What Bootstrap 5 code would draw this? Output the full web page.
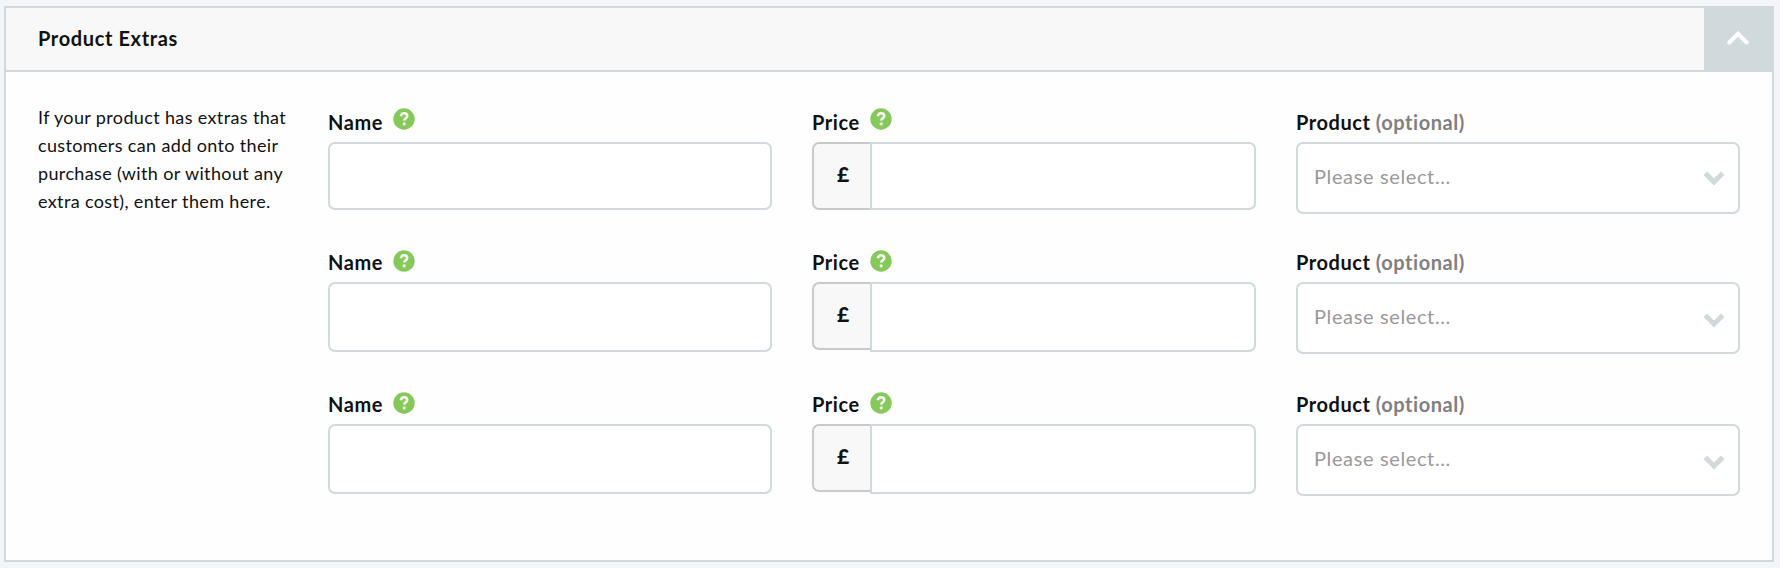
<!DOCTYPE html>
<html lang="en">
<head>
<meta charset="utf-8">
<meta name="viewport" content="width=device-width, initial-scale=1">
<title>Product Extras</title>
<link href="https://cdn.jsdelivr.net/npm/bootstrap@5.3.0/dist/css/bootstrap.min.css" rel="stylesheet">
<style>
html{height:100%;overflow:hidden}
body{height:100%;padding:6px 6px 6px 4px;background:#f3f5f8;font-family:Lato,"Liberation Sans",sans-serif;color:#111;font-size:20px;overflow:hidden}
.panel{height:556px;border:2px solid #d0d9dc;border-radius:0;background:#fefefe;color:#111}
.panel-head{height:64px;background:#f8f8f8;border-bottom:2px solid #d0d9dc;border-radius:0!important;padding:0 0 0 32px}
.panel-head h2{font-size:20px;font-weight:700;line-height:24px;letter-spacing:.63px;padding-bottom:2px}
.toggle{width:68px;height:64px;background:#d0d9dc;border:0;border-radius:0;padding:0 0 5px}
.panel-main{padding:28px 32px 0}
.intro{width:290px;font-size:18px;line-height:28px;padding-top:3px;letter-spacing:.36px}
.extras{display:grid;grid-template-columns:repeat(3,444px);column-gap:40px}
.extra{height:142px}
.first .extra{height:140px}
.field-label{height:42px;font-size:20px;font-weight:700;line-height:24px;padding:10px 0 0;letter-spacing:.55px}
.help{width:22px;height:22px;margin:0 0 0 10px}
.first .help{margin-top:-2px}
.box{height:70px;border:2px solid #d0d9dc;border-radius:7px;background:#fff;padding:0 16px;font-size:20px}
.first .box{height:68px}
.currency{width:60px;height:68px;border:2px solid #c9c9c9;border-right:0;border-radius:7px 0 0 7px;background:#f8f8f8;color:#111;font-size:21px;font-weight:900;padding:0 0 4px}
.price-box{border-radius:0 7px 7px 0!important;margin-left:-2px!important}
.pick,.first .pick{height:72px;color:#999;padding:0 13px 0 16px}
.ph{letter-spacing:.63px;padding-bottom:4px}
.opt{color:#808080}
.arrow{margin-top:4px}
.first .arrow{margin-top:0}
</style>
</head>
<body>
<svg class="d-none" xmlns="http://www.w3.org/2000/svg">
<symbol id="help" viewBox="0 0 22 22"><circle cx="11" cy="11" r="10.7" fill="#85c959"/><path d="M7.8 8.2C8.2 6.1 9.4 5.3 11.1 5.3c1.8 0 3.1 1 3.1 2.6 0 2.3-2.9 2.2-2.9 4.6" fill="none" stroke="#fff" stroke-width="2.5"/><circle cx="11.2" cy="15.8" r="1.6" fill="#fff"/></symbol>
<symbol id="arrow" viewBox="0 0 22 15"><path d="M2.3 2.3 11 11l8.700-8.700" fill="none" stroke="#d0d9dc" stroke-width="5"/></symbol>
</svg>
<section class="card panel">
  <header class="card-header panel-head d-flex align-items-center justify-content-between">
    <h2 class="m-0 title">Product Extras</h2>
    <button class="btn toggle d-flex align-items-center justify-content-center align-self-start" type="button" aria-label="Collapse"><svg width="22" height="14" viewBox="0 0 22 14"><path d="M2.300 11.500 11 2.800l8.700 8.700" fill="none" stroke="#fff" stroke-width="4" stroke-linecap="round"/></svg></button>
  </header>
  <div class="card-body panel-main d-flex">
    <p class="intro flex-shrink-0 m-0">If your product has extras that<br>customers can add onto their<br>purchase (with or without any<br>extra cost), enter them here.</p>
    <div>
      <div class="extras first">
        <div class="extra"><div class="field-label d-flex">Name<svg class="help"><use href="#help"/></svg></div><div class="box"></div></div>
        <div class="extra"><div class="field-label d-flex">Price<svg class="help"><use href="#help"/></svg></div><div class="input-group align-items-start"><span class="input-group-text currency justify-content-center">£</span><div class="box price-box flex-fill"></div></div></div>
        <div class="extra"><div class="field-label">Product <span class="opt">(optional)</span></div><div class="box pick d-flex align-items-center justify-content-between"><span class="ph">Please select...</span><svg class="arrow" width="22" height="15"><use href="#arrow"/></svg></div></div>
      </div>
      <div class="extras">
        <div class="extra"><div class="field-label d-flex">Name<svg class="help"><use href="#help"/></svg></div><div class="box"></div></div>
        <div class="extra"><div class="field-label d-flex">Price<svg class="help"><use href="#help"/></svg></div><div class="input-group align-items-start"><span class="input-group-text currency justify-content-center">£</span><div class="box price-box flex-fill"></div></div></div>
        <div class="extra"><div class="field-label">Product <span class="opt">(optional)</span></div><div class="box pick d-flex align-items-center justify-content-between"><span class="ph">Please select...</span><svg class="arrow" width="22" height="15"><use href="#arrow"/></svg></div></div>
      </div>
      <div class="extras">
        <div class="extra"><div class="field-label d-flex">Name<svg class="help"><use href="#help"/></svg></div><div class="box"></div></div>
        <div class="extra"><div class="field-label d-flex">Price<svg class="help"><use href="#help"/></svg></div><div class="input-group align-items-start"><span class="input-group-text currency justify-content-center">£</span><div class="box price-box flex-fill"></div></div></div>
        <div class="extra"><div class="field-label">Product <span class="opt">(optional)</span></div><div class="box pick d-flex align-items-center justify-content-between"><span class="ph">Please select...</span><svg class="arrow" width="22" height="15"><use href="#arrow"/></svg></div></div>
      </div>
    </div>
  </div>
</section>
<script src="https://cdn.jsdelivr.net/npm/bootstrap@5.3.0/dist/js/bootstrap.bundle.min.js"></script>
</body>
</html>
